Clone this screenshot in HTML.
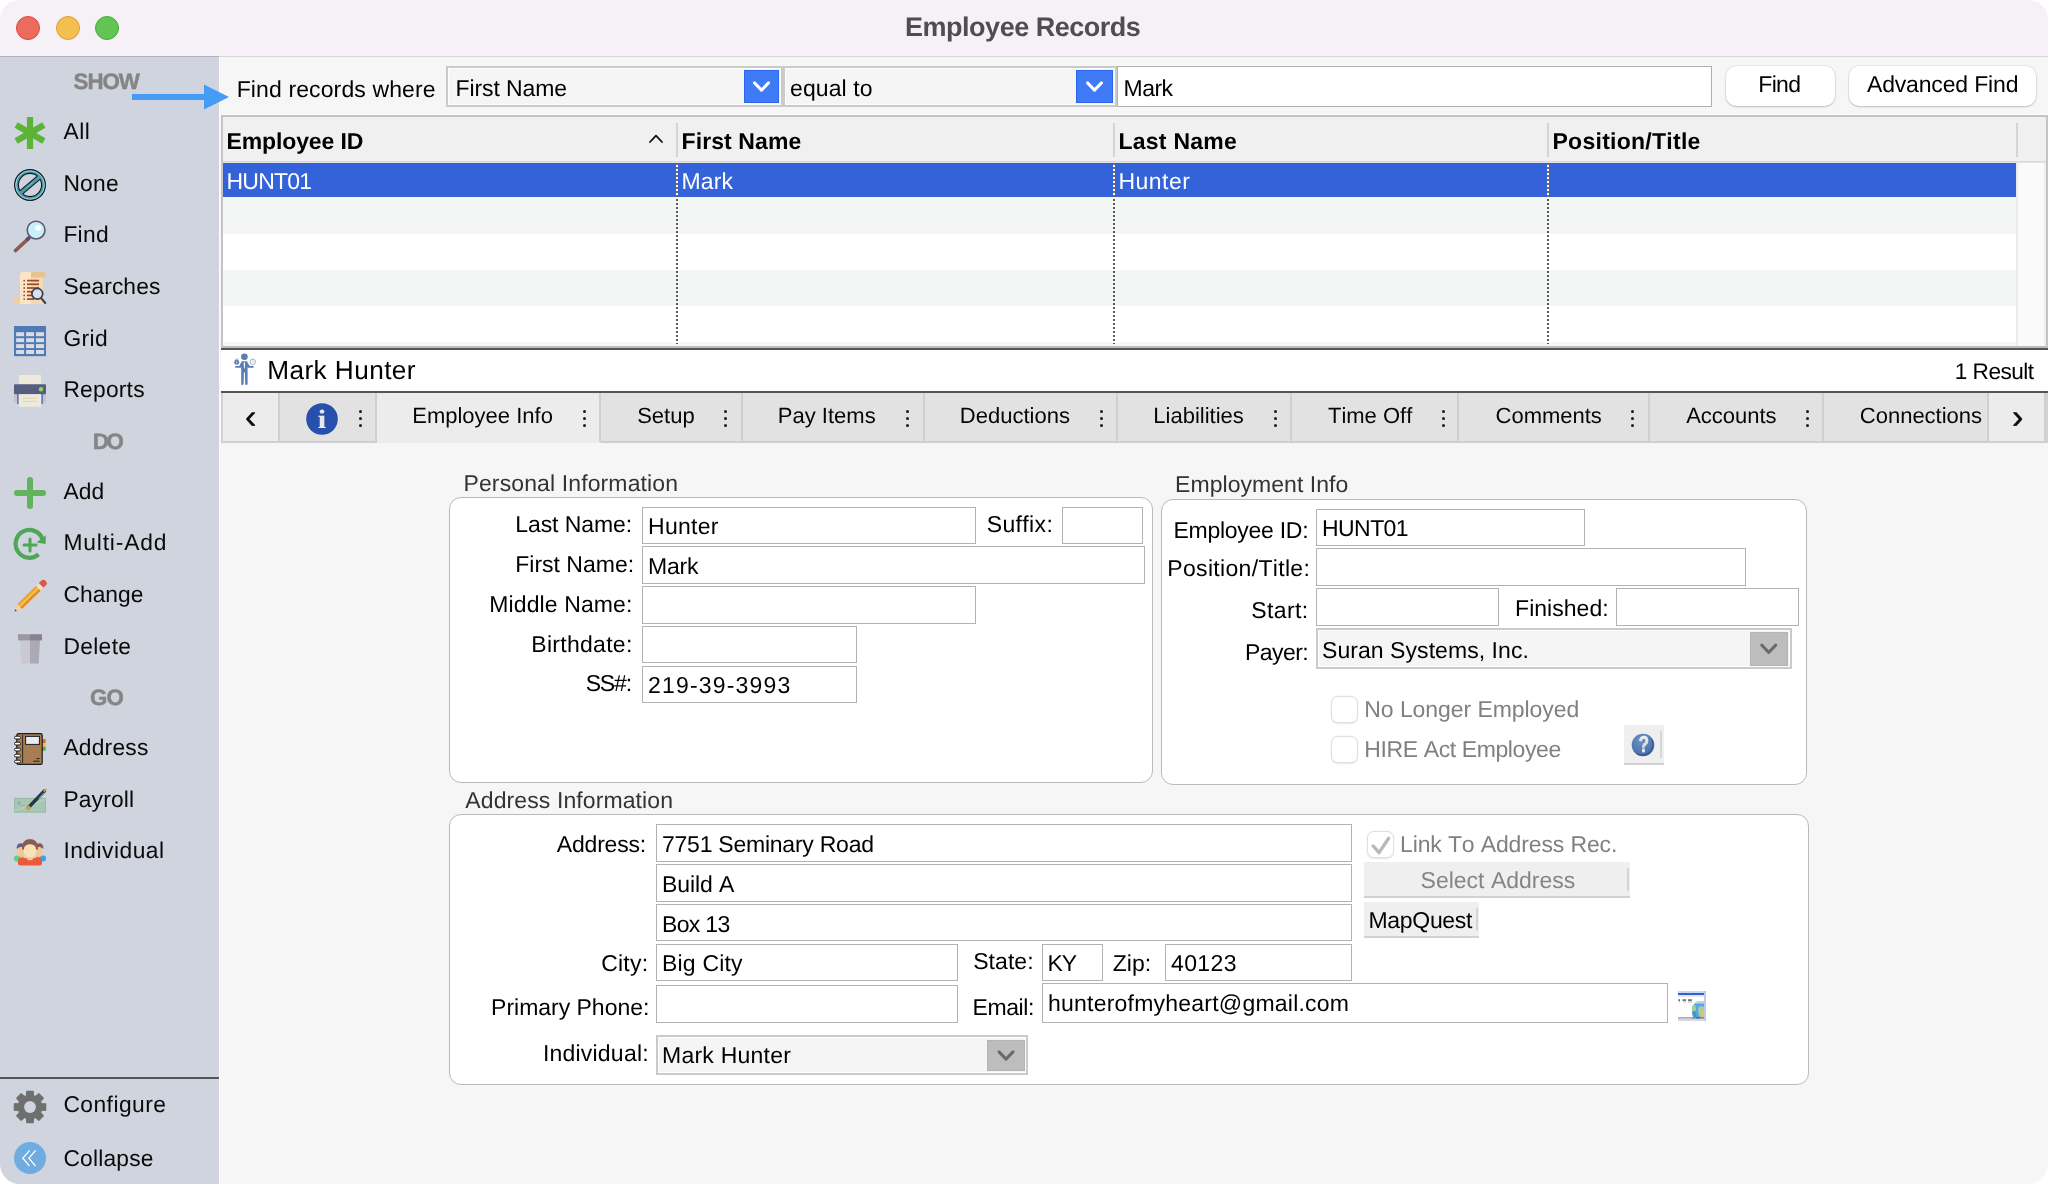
<!DOCTYPE html><html lang="en"><head><meta charset="utf-8"><title>Employee Records</title><style>
*{box-sizing:border-box;margin:0;padding:0}
html,body{width:2048px;height:1184px;background:#fff;overflow:hidden}
body{font-family:"Liberation Sans",sans-serif;font-kerning:none;text-rendering:geometricPrecision}
#win{position:absolute;left:0;top:0;width:2048px;height:1184px;background:#f6f6f6;border-radius:20px;overflow:hidden;will-change:transform}
#win div,#win span,#win svg,#win button,#win label,#win nav,#win header,#win aside,#win main,#win section{position:absolute}
.t{white-space:nowrap;line-height:1;display:block}
.ic{overflow:visible}
.inp{background:#fff;border:1px solid #b2b2b2}
.dd{background:#f5f5f5;border:2px solid #cacaca;box-shadow:inset 0 0 0 1px #fdfdfb}
.grp{background:#fff;border:1px solid #bababa;border-radius:12px}
.cb{background:#fff;border:1px solid #e0e0e0;border-radius:7px;box-shadow:0 0.5px 1.5px rgba(0,0,0,.10)}
.tab{background:#e2e2e2;border-right:2px solid #cfcfcf;border-bottom:2px solid #cfcfcf;top:393px;height:50px}
.dots i{position:absolute;left:0;width:3px;height:3px;background:#1a1a1a;border-radius:50%}
.btn{background:#fff;border-radius:10.5px;box-shadow:0 0 0 1px rgba(0,0,0,.05),0 1px 2px rgba(0,0,0,.18)}
.fbtn{background:#efefef;border-bottom:2px solid #d1d1d1}
</style></head><body><div id="win">
<header style="left:0;top:0;width:2048px;height:57px;background:#f6f1f7;border-bottom:1px solid #d6d6d6">
<div style="left:16px;top:15.5px;width:24px;height:24px;border-radius:50%;background:#ed6a5e;border:1px solid #d8493e"></div>
<div style="left:55.75px;top:15.5px;width:24px;height:24px;border-radius:50%;background:#f5bf4f;border:1px solid #d9a133"></div>
<div style="left:95.25px;top:15.5px;width:24px;height:24px;border-radius:50%;background:#61c554;border:1px solid #4aa93f"></div>
<span class="t" style="left:905.09px;top:14px;font-size:27px;letter-spacing:-0.492px;color:#4e4e4e;font-weight:bold;">Employee Records</span>
</header>
<aside style="left:0;top:56px;width:219px;height:1128px;background:#d0d4de;border-top:1px solid #adb2be">
</aside>
<span class="t" style="left:73.56px;top:71px;font-size:22.3px;letter-spacing:-1.036px;color:#858585;font-weight:bold;-webkit-text-stroke:0.45px #858585;">SHOW</span>
<span class="t" style="left:92.71px;top:431px;font-size:22.3px;letter-spacing:-2.422px;color:#858585;font-weight:bold;-webkit-text-stroke:0.45px #858585;">DO</span>
<span class="t" style="left:90.09px;top:687px;font-size:22.3px;letter-spacing:-0.900px;color:#858585;font-weight:bold;-webkit-text-stroke:0.45px #858585;">GO</span>
<span class="t" style="left:63.40px;top:120px;font-size:22.8px;letter-spacing:0.593px;color:#0a0a0a;">All</span>
<span class="t" style="left:63.40px;top:172px;font-size:22.8px;letter-spacing:0.236px;color:#0a0a0a;">None</span>
<span class="t" style="left:63.40px;top:223px;font-size:22.8px;letter-spacing:0.272px;color:#0a0a0a;">Find</span>
<span class="t" style="left:63.40px;top:275px;font-size:22.8px;letter-spacing:0.086px;color:#0a0a0a;">Searches</span>
<span class="t" style="left:63.40px;top:327px;font-size:22.8px;letter-spacing:0.432px;color:#0a0a0a;">Grid</span>
<span class="t" style="left:63.40px;top:378px;font-size:22.8px;letter-spacing:0.223px;color:#0a0a0a;">Reports</span>
<span class="t" style="left:63.40px;top:480px;font-size:22.8px;letter-spacing:0.101px;color:#0a0a0a;">Add</span>
<span class="t" style="left:63.40px;top:531px;font-size:22.8px;letter-spacing:0.846px;color:#0a0a0a;">Multi-Add</span>
<span class="t" style="left:63.40px;top:583px;font-size:22.8px;letter-spacing:0.049px;color:#0a0a0a;">Change</span>
<span class="t" style="left:63.40px;top:635px;font-size:22.8px;letter-spacing:0.341px;color:#0a0a0a;">Delete</span>
<span class="t" style="left:63.40px;top:736px;font-size:22.8px;letter-spacing:0.214px;color:#0a0a0a;">Address</span>
<span class="t" style="left:63.40px;top:788px;font-size:22.8px;letter-spacing:0.156px;color:#0a0a0a;">Payroll</span>
<span class="t" style="left:63.40px;top:839px;font-size:22.8px;letter-spacing:0.477px;color:#0a0a0a;">Individual</span>
<span class="t" style="left:63.40px;top:1093px;font-size:22.8px;letter-spacing:0.469px;color:#0a0a0a;">Configure</span>
<span class="t" style="left:63.40px;top:1147px;font-size:22.8px;letter-spacing:0.199px;color:#0a0a0a;">Collapse</span>
<div style="left:0;top:1077px;width:219px;height:2px;background:#555"></div>
<svg class="ic" style="left:14px;top:117px" width="32" height="32" viewBox="0 0 32 32" ><g transform="translate(16,16)"><rect x="-3.1" y="-16" width="6.2" height="32" fill="#5bb438"/><g transform="rotate(60)"><rect x="-3.1" y="-16" width="6.2" height="32" fill="#5bb438"/></g><g transform="rotate(-60)"><rect x="-3.1" y="-16" width="6.2" height="32" fill="#5bb438"/></g></g></svg>
<svg class="ic" style="left:14px;top:169px" width="32" height="32" viewBox="0 0 32 32" ><circle cx="16" cy="16" r="15.4" fill="#4b9aab" stroke="#10181c" stroke-width="1.1"/><circle cx="16" cy="16" r="14.2" fill="none" stroke="#a9e4ea" stroke-width="0.9" opacity="0.9"/><circle cx="16" cy="16" r="11.6" fill="#d0d4de" stroke="#10181c" stroke-width="1.1"/><g transform="translate(16,16) rotate(-40)"><rect x="-12.6" y="-2.1" width="25.2" height="4.2" fill="#4b9aab"/><path d="M-11.2 -2.1 H11.2 M-11.2 2.1 H11.2" stroke="#10181c" stroke-width="1.1" fill="none"/><path d="M-3 0 H3" stroke="#a9e4ea" stroke-width="0.8" stroke-dasharray="1.2 1.2"/></g></svg>
<svg class="ic" style="left:14px;top:217px" width="33" height="36" viewBox="0 0 33 36" ><path d="M14.5 21.5 L1.4 33.6" stroke="#8a5b52" stroke-width="3.6" stroke-linecap="round"/><path d="M15.6 20.4 L12.6 23.2" stroke="#5a5066" stroke-width="3.8" stroke-linecap="butt"/><circle cx="22.1" cy="13.1" r="8.9" fill="#c6effc" stroke="#5b5570" stroke-width="1.6"/><ellipse cx="24.2" cy="11" rx="2.9" ry="2.7" fill="#fff"/></svg>
<svg class="ic" style="left:14px;top:272px" width="32" height="32" viewBox="0 0 32 32" ><path d="M6 2.5 Q6 0 9 0 L29 0 Q32 0 32 3 L32 5.5 L28.5 5.5 L28.5 32 L4 32 Q0 32 0 28.5 L0 25 L6 25 Z" fill="#fce5c4"/><path d="M17 0 L29 0 Q32 0 32 3 L32 5.5 L28.5 5.5 L28.5 32 L17 32 Z" fill="#f6d9b0"/><path d="M17 0 L29 0 Q32 0 32 3 L32 5.5 L17 5.5 Z" fill="#e6c391"/><path d="M0 25 L6 25 L6 32 L4 32 Q0 32 0 28.5 Z" fill="#f1cf9f"/><g stroke="#9b4a2c" stroke-width="1.7"><path d="M13 8.6 H25"/><path d="M13 12.3 H25"/><path d="M13 16 H25"/><path d="M13 19.7 H19"/><path d="M13 23.4 H18"/><path d="M13 27.1 H20"/></g><g fill="#9b4a2c"><circle cx="10.2" cy="8.6" r="0.9"/><circle cx="10.2" cy="12.3" r="0.9"/><circle cx="10.2" cy="16" r="0.9"/><circle cx="10.2" cy="19.7" r="0.9"/><circle cx="10.2" cy="23.4" r="0.9"/><circle cx="10.2" cy="27.1" r="0.9"/></g><path d="M27 26 L31.3 31" stroke="#3b404c" stroke-width="2" stroke-linecap="round"/><circle cx="23.3" cy="21.8" r="5.4" fill="#d9dff1" stroke="#3b404c" stroke-width="1.7"/></svg>
<svg class="ic" style="left:14px;top:325.8px" width="32" height="30.2" viewBox="0 0 32 30.2" ><rect x="0" y="0" width="32" height="30.2" fill="#4f7ab6"/><rect x="2.1" y="6.2" width="8" height="4" fill="#d9dce3"/><rect x="12.1" y="6.2" width="8" height="4" fill="#d9dce3"/><rect x="22.0" y="6.2" width="8" height="4" fill="#d9dce3"/><rect x="2.1" y="12.2" width="8" height="4" fill="#d9dce3"/><rect x="12.1" y="12.2" width="8" height="4" fill="#d9dce3"/><rect x="22.0" y="12.2" width="8" height="4" fill="#d9dce3"/><rect x="2.1" y="18.1" width="8" height="4" fill="#d9dce3"/><rect x="12.1" y="18.1" width="8" height="4" fill="#d9dce3"/><rect x="22.0" y="18.1" width="8" height="4" fill="#d9dce3"/><rect x="2.1" y="24.0" width="8" height="4" fill="#d9dce3"/><rect x="12.1" y="24.0" width="8" height="4" fill="#d9dce3"/><rect x="22.0" y="24.0" width="8" height="4" fill="#d9dce3"/></svg>
<svg class="ic" style="left:14px;top:375.2px" width="32" height="32" viewBox="0 0 32 32" ><rect x="5" y="0" width="22" height="10" fill="#edeadb"/><rect x="0" y="17" width="32" height="10.5" fill="#c3c4c6"/><rect x="3" y="18" width="1.6" height="11" fill="#6a78c4"/><rect x="27.4" y="18" width="1.6" height="11" fill="#6a78c4"/><rect x="0" y="9.2" width="32" height="10" rx="1" fill="#565d80"/><circle cx="27" cy="14.2" r="2.2" fill="#90d65a"/><rect x="5" y="19.2" width="22" height="12.6" fill="#edeadb"/><path d="M9 23.2 H23 M9 26.4 H23" stroke="#d6d0b8" stroke-width="0.9"/></svg>
<svg class="ic" style="left:14px;top:477px" width="32" height="32" viewBox="0 0 32 32" ><path d="M16 3 V29 M3 16 H29" stroke="#62b35b" stroke-width="6" stroke-linecap="round"/></svg>
<svg class="ic" style="left:14px;top:529.2px" width="32" height="32" viewBox="0 0 32 32" ><path d="M24.6 25.4 A13.9 13.9 0 1 1 28.6 10.2" fill="none" stroke="#4fa658" stroke-width="4.2" stroke-linecap="butt"/><path d="M31.8 6.2 L31.6 15 L22.4 13.6 Z" fill="#4fa658"/><path d="M16 10 V22 M10 16 H22" stroke="#4fa658" stroke-width="3" stroke-linecap="round"/></svg>
<svg class="ic" style="left:14px;top:580px" width="33" height="33" viewBox="0 0 33 33" ><g transform="translate(0.4,31.6) rotate(-44.4)"><path d="M0 0 L7.4 -3.3 L7.4 3.3 Z" fill="#f7cfa2"/><path d="M0 0 L2.4 -1.1 L2.4 1.1 Z" fill="#3a3a3a"/><rect x="7.4" y="-3.3" width="26" height="6.6" fill="#f0a232"/><rect x="7.4" y="-1.1" width="26" height="2.2" fill="#f6c24a"/><rect x="7.4" y="1.1" width="26" height="2.2" fill="#e28a25"/><rect x="33.4" y="-3.3" width="4" height="6.6" fill="#f2ead0"/><path d="M34.7 -3.3 V3.3 M36.1 -3.3 V3.3" stroke="#d8cfae" stroke-width="0.6"/><path d="M37.4 -3.3 H40.6 A3.3 3.3 0 0 1 40.6 3.3 H37.4 Z" fill="#d45c4e"/></g></svg>
<svg class="ic" style="left:18px;top:632px" width="24" height="32" viewBox="0 0 24 32" ><rect x="7.5" y="0" width="9" height="3" rx="1" fill="#d6d5d9"/><path d="M2 8 L22 8 L20.6 31.5 L3.6 31.5 Z" fill="#cac9cf"/><path d="M12 8 L22 8 L20.6 31.5 L12 31.5 Z" fill="#aba9b4"/><rect x="0" y="2.2" width="12" height="6.2" fill="#9b98a4"/><rect x="12" y="2.2" width="12" height="6.2" fill="#86838f"/></svg>
<svg class="ic" style="left:14px;top:732.6px" width="32" height="32" viewBox="0 0 32 32" ><rect x="28" y="6.2" width="3.6" height="3.8" fill="#e8622c"/><rect x="28" y="10" width="3.6" height="3.8" fill="#f2c230"/><rect x="28" y="13.8" width="3.6" height="3.8" fill="#4caf3c"/><rect x="2.8" y="0.6" width="25.4" height="30.8" rx="1.6" fill="#a77d54" stroke="#1d1d1d" stroke-width="1.2"/><path d="M8.6 2 V30" stroke="#1d1d1d" stroke-width="0.9"/><rect x="11.6" y="3.4" width="13.8" height="8" fill="#e9edf0" stroke="#1d1d1d" stroke-width="1"/><path d="M22.5 25.6 H25.6 M19.4 28.2 H25.6" stroke="#1d1d1d" stroke-width="1"/><rect x="0.5" y="3.2" width="6" height="2.8" rx="1.4" fill="#fff" stroke="#1d1d1d" stroke-width="1"/><rect x="0.5" y="9.2" width="6" height="2.8" rx="1.4" fill="#fff" stroke="#1d1d1d" stroke-width="1"/><rect x="0.5" y="15.2" width="6" height="2.8" rx="1.4" fill="#fff" stroke="#1d1d1d" stroke-width="1"/><rect x="0.5" y="21.2" width="6" height="2.8" rx="1.4" fill="#fff" stroke="#1d1d1d" stroke-width="1"/><rect x="0.5" y="27.2" width="6" height="2.8" rx="1.4" fill="#fff" stroke="#1d1d1d" stroke-width="1"/></svg>
<svg class="ic" style="left:14px;top:788.6px" width="32" height="25" viewBox="0 0 32 25" ><rect x="0.4" y="9.3" width="31.2" height="13.9" fill="#a9c5b5" stroke="#90b6a2" stroke-width="0.8"/><path d="M0.4 22 L31.6 10.5" stroke="#b9d2c4" stroke-width="1.2"/><rect x="3" y="12.3" width="4" height="3.4" fill="#93b7a4"/><path d="M7 16.6 H12" stroke="#93b7a4" stroke-width="0.9"/><path d="M14.2 18.8 L30.6 1.8" stroke="#1f3a4b" stroke-width="3.4" stroke-linecap="round"/><path d="M24.5 9.6 L30.2 3.6" stroke="#9fb4c0" stroke-width="0.8"/><path d="M12.6 20.6 L15.8 17.2" stroke="#d9a53a" stroke-width="3" stroke-linecap="butt"/><path d="M30.4 1.9 L31.8 0.4" stroke="#d9a53a" stroke-width="2" stroke-linecap="round"/></svg>
<svg class="ic" style="left:14px;top:838.8px" width="32" height="27" viewBox="0 0 32 27" ><rect x="0" y="16.4" width="10" height="6" rx="2.6" fill="#5fd081"/><rect x="22" y="16.4" width="10" height="6" rx="2.6" fill="#3fa0f2"/><path d="M2.6 9.4 Q2.6 4.2 7 4.2 Q10.6 4.2 10.6 9.4 Z" fill="#6b5c86"/><path d="M21.4 9.4 Q21.4 4.2 25.4 4.2 Q29.4 4.2 29.4 9.4 Z" fill="#8a5b52"/><rect x="3.6" y="8" width="7.4" height="10" rx="3.4" fill="#f4c894"/><rect x="21" y="8" width="7.4" height="10" rx="3.4" fill="#f4c894"/><rect x="4" y="19" width="24" height="7.6" rx="2.4" fill="#ea5a36"/><rect x="12.6" y="15.6" width="6.8" height="5.6" rx="2.6" fill="#f4c894"/><path d="M8 10.6 Q7.4 0 16 0 Q24.6 0 24 10.6 Z" fill="#8a5b52"/><rect x="9.8" y="5.2" width="12.4" height="13" rx="5.6" fill="#fbe1b6"/></svg>
<svg class="ic" style="left:14px;top:1090.6px" width="32" height="32" viewBox="0 0 32 32" ><path d="M12.51 4.73 L12.82 0.32 L19.18 0.32 L19.49 4.73 L21.51 5.56 L24.84 2.66 L29.34 7.16 L26.44 10.49 L27.27 12.51 L31.68 12.82 L31.68 19.18 L27.27 19.49 L26.44 21.51 L29.34 24.84 L24.84 29.34 L21.51 26.44 L19.49 27.27 L19.18 31.68 L12.82 31.68 L12.51 27.27 L10.49 26.44 L7.16 29.34 L2.66 24.84 L5.56 21.51 L4.73 19.49 L0.32 19.18 L0.32 12.82 L4.73 12.51 L5.56 10.49 L2.66 7.16 L7.16 2.66 L10.49 5.56 Z" fill="#6f6f6f" stroke="#6f6f6f" stroke-width="1.2" stroke-linejoin="round"/><circle cx="16" cy="16" r="5.9" fill="#d0d4de"/></svg>
<svg class="ic" style="left:14px;top:1142px" width="32" height="32" viewBox="0 0 32 32" ><circle cx="16" cy="16" r="16" fill="#6fade0"/><path d="M15.2 8.8 L8.9 16.2 L15.2 23.6 M21.2 8.8 L14.9 16.2 L21.2 23.6" fill="none" stroke="#fff" stroke-width="1.3" stroke-linecap="round" stroke-linejoin="miter"/></svg>
<div style="left:219px;top:57px;width:1px;height:1127px;background:#fbfbfb"></div>
<span class="t" style="left:236.71px;top:78px;font-size:23px;letter-spacing:0.115px;color:#000;">Find records where</span>
<div class="dd" style="left:446px;top:66px;width:337px;height:41px;"></div>
<span class="t" style="left:455.51px;top:77px;font-size:23px;letter-spacing:-0.105px;color:#000;">First Name</span>
<div class="dd" style="left:783px;top:66px;width:334px;height:41px;"></div>
<span class="t" style="left:790.02px;top:77px;font-size:23px;letter-spacing:0.085px;color:#000;">equal to</span>
<div style="left:744px;top:70px;width:35px;height:33px;background:#3f7bf6;box-shadow:inset 0 0 0 1px #2a66f0"><svg class="ic" style="left:0;top:0" width="35" height="33"><path d="M10.5 12.9 L17.5 20.1 L24.5 12.9" fill="none" stroke="#fff" stroke-width="3" stroke-linecap="round" stroke-linejoin="round"/></svg></div>
<div style="left:1076px;top:70px;width:37px;height:33px;background:#3f7bf6;box-shadow:inset 0 0 0 1px #2a66f0"><svg class="ic" style="left:0;top:0" width="37" height="33"><path d="M11.5 12.9 L18.5 20.1 L25.5 12.9" fill="none" stroke="#fff" stroke-width="3" stroke-linecap="round" stroke-linejoin="round"/></svg></div>
<div style="left:1117px;top:66px;width:595px;height:41px;background:#fff;border:1px solid #b0b0b0"></div>
<span class="t" style="left:1123.61px;top:77px;font-size:23px;letter-spacing:-0.586px;color:#000;">Mark</span>
<div class="btn" style="left:1725.5px;top:66px;width:109.5px;height:40px;"></div>
<span class="t" style="left:1758.31px;top:73px;font-size:23px;letter-spacing:-0.691px;color:#000;">Find</span>
<div class="btn" style="left:1848.5px;top:66px;width:187.5px;height:40px;"></div>
<span class="t" style="left:1866.96px;top:73px;font-size:23px;letter-spacing:-0.159px;color:#000;">Advanced Find</span>
<section style="left:221px;top:115px;width:1827px;height:233px;background:#fff;border:2px solid #c4c4c4;border-bottom-color:#bdbdbd">
</section>
<div style="left:221px;top:114px;width:1827px;height:1px;background:#fcfcfc"></div>
<div style="left:223px;top:117px;width:1823px;height:45px;background:#f0f0f0;border-bottom:1px solid #d9d9d9"></div>
<div style="left:223px;top:162px;width:1823px;height:1px;background:#e3e3e3"></div>
<div style="left:223px;top:163px;width:1793px;height:34px;background:#3462d9"></div>
<div style="left:223px;top:197px;width:1793px;height:37px;background:#f4f5f5"></div>
<div style="left:223px;top:270px;width:1793px;height:36px;background:#f4f5f5"></div>
<div style="left:223px;top:342px;width:1793px;height:4px;background:#f5f6f6"></div>
<div style="left:2016px;top:163px;width:30px;height:183px;background:#fafafa;border-left:2px solid #ebebeb;border-right:2px solid #eeeeee"></div>
<div style="left:676px;top:123px;width:2px;height:34px;background:#d4d4d4"></div>
<div style="left:1113px;top:123px;width:2px;height:34px;background:#d4d4d4"></div>
<div style="left:1547px;top:123px;width:2px;height:34px;background:#d4d4d4"></div>
<div style="left:2016px;top:123px;width:2px;height:34px;background:#d4d4d4"></div>
<div style="left:676px;top:163px;width:2px;height:181px;background:repeating-linear-gradient(to bottom,#5a5a5a 0,#5a5a5a 2px,transparent 2px,transparent 4px)"></div>
<div style="left:676px;top:163px;width:2px;height:34px;background:repeating-linear-gradient(to bottom,#7a6a52 0,#7a6a52 2px,#fff 2px,#fff 4px)"></div>
<div style="left:1113px;top:163px;width:2px;height:181px;background:repeating-linear-gradient(to bottom,#5a5a5a 0,#5a5a5a 2px,transparent 2px,transparent 4px)"></div>
<div style="left:1113px;top:163px;width:2px;height:34px;background:repeating-linear-gradient(to bottom,#7a6a52 0,#7a6a52 2px,#fff 2px,#fff 4px)"></div>
<div style="left:1547px;top:163px;width:2px;height:181px;background:repeating-linear-gradient(to bottom,#5a5a5a 0,#5a5a5a 2px,transparent 2px,transparent 4px)"></div>
<div style="left:1547px;top:163px;width:2px;height:34px;background:repeating-linear-gradient(to bottom,#7a6a52 0,#7a6a52 2px,#fff 2px,#fff 4px)"></div>
<span class="t" style="left:226.50px;top:130px;font-size:23px;letter-spacing:-0.128px;color:#000;font-weight:bold;">Employee ID</span>
<span class="t" style="left:681.50px;top:130px;font-size:23px;letter-spacing:0.101px;color:#000;font-weight:bold;">First Name</span>
<span class="t" style="left:1118.50px;top:130px;font-size:23px;letter-spacing:0.245px;color:#000;font-weight:bold;">Last Name</span>
<span class="t" style="left:1552.50px;top:130px;font-size:23px;letter-spacing:0.269px;color:#000;font-weight:bold;">Position/Title</span>
<svg class="ic" style="left:647px;top:132px" width="18" height="14"><path d="M3 10 L9 3.6 L15 10" fill="none" stroke="#111" stroke-width="1.8" stroke-linecap="round" stroke-linejoin="round"/></svg>
<span class="t" style="left:226.50px;top:170px;font-size:23px;letter-spacing:-0.768px;color:#fff;">HUNT01</span>
<span class="t" style="left:681.50px;top:170px;font-size:23px;letter-spacing:0.119px;color:#fff;">Mark</span>
<span class="t" style="left:1118.50px;top:170px;font-size:23px;letter-spacing:0.470px;color:#fff;">Hunter</span>
<div style="left:221px;top:348px;width:1827px;height:2px;background:#555"></div>
<div style="left:221px;top:350px;width:1827px;height:41px;background:#fff"></div>
<div style="left:221px;top:391px;width:1827px;height:2px;background:#555"></div>
<svg class="ic" style="left:233px;top:353px" width="24" height="33" viewBox="0 0 24 33" ><circle cx="11.4" cy="3.8" r="3.3" fill="#5b7db1"/><path d="M2.4 13 Q1.8 13.9 2.4 14.8 L7.4 14.8 L8.2 14.2 L8.2 31 Q8.3 32 9.3 32 Q10.4 32 10.6 31 L10.9 19.6 L11.9 19.6 L12.2 31 Q12.4 32 13.5 32 Q14.5 32 14.6 31 L14.6 14.2 L15.4 14.8 L20.4 14.8 Q21 13.9 20.4 13 L16.6 13 L13.9 8.2 L8.9 8.2 L6.2 13 Z" fill="#5b7db1"/><path d="M11.4 8.6 L12.1 10.4 L11.8 15 L11.4 15.8 L11 15 L10.7 10.4 Z" fill="#fff"/><circle cx="3.7" cy="9.3" r="2.5" fill="#5b7db1"/><path d="M2.3 5.4 L3.7 7 L5.1 5.4" stroke="#5b7db1" stroke-width="0.7" fill="none"/><path d="M3.7 8 V10.6" stroke="#dfe6f2" stroke-width="0.7"/><circle cx="19.8" cy="8.8" r="2.7" fill="#fff" stroke="#9db1d3" stroke-width="1"/><path d="M19.8 7.4 V8.9 H20.8" stroke="#9db1d3" stroke-width="0.7" fill="none"/></svg>
<span class="t" style="left:267.15px;top:357px;font-size:26.2px;letter-spacing:0.435px;color:#000;">Mark Hunter</span>
<span class="t" style="left:1954.78px;top:361px;font-size:22.6px;letter-spacing:-0.503px;color:#000;">1 Result</span>
<nav style="left:221px;top:393px;width:1827px;height:50px;background:#e2e2e2;border-bottom:2px solid #cfcfcf">
</nav>
<div style="left:221px;top:393px;width:2px;height:50px;background:#d2d2d2"></div>
<div class="tab" style="left:223px;width:57px;background:#ececec;"></div>
<div class="tab" style="left:280px;width:97px;background:#e2e2e2;"></div>
<div class="tab" style="left:377px;width:224px;background:#ececec;border-bottom-color:#ececec;border-right-color:#cfcfcf;"></div>
<div class="tab" style="left:601px;width:141.5px;"></div>
<div class="tab" style="left:742.5px;width:182.0px;"></div>
<div class="tab" style="left:924.5px;width:193.0px;"></div>
<div class="tab" style="left:1117.5px;width:174.5px;"></div>
<div class="tab" style="left:1292px;width:167px;"></div>
<div class="tab" style="left:1459px;width:191px;"></div>
<div class="tab" style="left:1650px;width:174px;"></div>
<div class="tab" style="left:1824px;width:165px;"></div>
<div class="tab" style="left:1989px;width:57px;background:#ececec;"></div>
<div style="left:2046px;top:393px;width:2px;height:50px;background:#d2d2d2"></div>
<span class="t" style="left:244.94px;top:400px;font-size:34px;letter-spacing:0.000px;color:#0a0a0a;-webkit-text-stroke:0.5px #0a0a0a;">‹</span>
<svg class="ic" style="left:305.9px;top:402.7px" width="32" height="32" viewBox="0 0 32 32" ><circle cx="16" cy="16" r="15.8" fill="#2750ae"/><text transform="translate(16,25.3) scale(1.2,1)" text-anchor="middle" font-family="Liberation Serif,serif" font-weight="bold" font-size="26.6" fill="#e8e8e8">i</text></svg>
<div class="dots" style="left:358.5px;top:409.8px;width:4px;height:18px"><i style="top:0"></i><i style="top:7.2px"></i><i style="top:14.4px"></i></div>
<span class="t" style="left:412.24px;top:405px;font-size:22px;letter-spacing:0.000px;color:#050505;">Employee Info</span>
<div class="dots" style="left:582.5px;top:409.8px;width:4px;height:18px"><i style="top:0"></i><i style="top:7.2px"></i><i style="top:14.4px"></i></div>
<span class="t" style="left:637.19px;top:405px;font-size:22px;letter-spacing:0.000px;color:#050505;">Setup</span>
<div class="dots" style="left:724.0px;top:409.8px;width:4px;height:18px"><i style="top:0"></i><i style="top:7.2px"></i><i style="top:14.4px"></i></div>
<span class="t" style="left:777.84px;top:405px;font-size:22px;letter-spacing:0.000px;color:#050505;">Pay Items</span>
<div class="dots" style="left:906.0px;top:409.8px;width:4px;height:18px"><i style="top:0"></i><i style="top:7.2px"></i><i style="top:14.4px"></i></div>
<span class="t" style="left:959.84px;top:405px;font-size:22px;letter-spacing:0.000px;color:#050505;">Deductions</span>
<div class="dots" style="left:1099.5px;top:409.8px;width:4px;height:18px"><i style="top:0"></i><i style="top:7.2px"></i><i style="top:14.4px"></i></div>
<span class="t" style="left:1153.37px;top:405px;font-size:22px;letter-spacing:0.000px;color:#050505;">Liabilities</span>
<div class="dots" style="left:1274.0px;top:409.8px;width:4px;height:18px"><i style="top:0"></i><i style="top:7.2px"></i><i style="top:14.4px"></i></div>
<span class="t" style="left:1327.94px;top:405px;font-size:22px;letter-spacing:0.000px;color:#050505;">Time Off</span>
<div class="dots" style="left:1441.5px;top:409.8px;width:4px;height:18px"><i style="top:0"></i><i style="top:7.2px"></i><i style="top:14.4px"></i></div>
<span class="t" style="left:1495.53px;top:405px;font-size:22px;letter-spacing:0.000px;color:#050505;">Comments</span>
<div class="dots" style="left:1631.25px;top:409.8px;width:4px;height:18px"><i style="top:0"></i><i style="top:7.2px"></i><i style="top:14.4px"></i></div>
<span class="t" style="left:1686.13px;top:405px;font-size:22px;letter-spacing:0.000px;color:#050505;">Accounts</span>
<div class="dots" style="left:1805.5px;top:409.8px;width:4px;height:18px"><i style="top:0"></i><i style="top:7.2px"></i><i style="top:14.4px"></i></div>
<span class="t" style="left:1859.79px;top:405px;font-size:22px;letter-spacing:0.000px;color:#050505;">Connections</span>
<span class="t" style="left:2012.12px;top:400px;font-size:34px;letter-spacing:0.000px;color:#0a0a0a;-webkit-text-stroke:0.5px #0a0a0a;">›</span>
<span class="t" style="left:463.51px;top:472px;font-size:23px;letter-spacing:0.119px;color:#333;">Personal Information</span>
<div class="grp" style="left:449px;top:497px;width:704px;height:286px;"></div>
<div class="inp" style="left:642px;top:507px;width:334px;height:37px;"></div>
<div class="inp" style="left:1062px;top:507px;width:81px;height:37px;"></div>
<div class="inp" style="left:642px;top:546px;width:503px;height:38px;"></div>
<div class="inp" style="left:642px;top:586px;width:334px;height:38px;"></div>
<div class="inp" style="left:642px;top:626px;width:215px;height:37px;"></div>
<div class="inp" style="left:642px;top:666px;width:215px;height:37px;"></div>
<span class="t" style="left:515.31px;top:513px;font-size:23px;letter-spacing:-0.091px;color:#000;">Last Name:</span>
<span class="t" style="left:986.76px;top:513px;font-size:23px;letter-spacing:0.364px;color:#000;">Suffix:</span>
<span class="t" style="left:515.31px;top:553px;font-size:23px;letter-spacing:-0.005px;color:#000;">First Name:</span>
<span class="t" style="left:489.31px;top:593px;font-size:23px;letter-spacing:0.105px;color:#000;">Middle Name:</span>
<span class="t" style="left:531.31px;top:633px;font-size:23px;letter-spacing:0.288px;color:#000;">Birthdate:</span>
<span class="t" style="left:585.66px;top:672px;font-size:23px;letter-spacing:-1.140px;color:#000;">SS#:</span>
<span class="t" style="left:648.10px;top:515px;font-size:23px;letter-spacing:0.250px;color:#000;">Hunter</span>
<span class="t" style="left:648.10px;top:555px;font-size:23px;letter-spacing:-0.248px;color:#000;">Mark</span>
<span class="t" style="left:648.10px;top:674px;font-size:23px;letter-spacing:1.172px;color:#000;">219-39-3993</span>
<span class="t" style="left:1175.11px;top:473px;font-size:23px;letter-spacing:0.037px;color:#333;">Employment Info</span>
<div class="grp" style="left:1161px;top:499px;width:646px;height:286px;"></div>
<div class="inp" style="left:1316px;top:509px;width:269px;height:37px;"></div>
<div class="inp" style="left:1316px;top:548px;width:430px;height:38px;"></div>
<div class="inp" style="left:1316px;top:588px;width:183px;height:38px;"></div>
<div class="inp" style="left:1616px;top:588px;width:183px;height:38px;"></div>
<div class="dd" style="left:1316px;top:628px;width:476px;height:41px;"></div>
<div style="left:1750px;top:632px;width:37.5px;height:33.5px;background:#bdbdbd;box-shadow:inset 0 0 0 1px #b4b4b4"><svg class="ic" style="left:0;top:0" width="37.5" height="33.5"><path d="M11.75 13.15 L18.75 20.35 L25.75 13.15" fill="none" stroke="#6a6a6a" stroke-width="3" stroke-linecap="round" stroke-linejoin="round"/></svg></div>
<span class="t" style="left:1173.51px;top:519px;font-size:23px;letter-spacing:-0.270px;color:#000;">Employee ID:</span>
<span class="t" style="left:1167.31px;top:557px;font-size:23px;letter-spacing:0.320px;color:#000;">Position/Title:</span>
<span class="t" style="left:1251.36px;top:599px;font-size:23px;letter-spacing:0.357px;color:#000;">Start:</span>
<span class="t" style="left:1515.11px;top:597px;font-size:23px;letter-spacing:0.020px;color:#000;">Finished:</span>
<span class="t" style="left:1245.11px;top:641px;font-size:23px;letter-spacing:-0.597px;color:#000;">Payer:</span>
<span class="t" style="left:1322.00px;top:517px;font-size:23px;letter-spacing:-0.568px;color:#000;">HUNT01</span>
<span class="t" style="left:1322.00px;top:639px;font-size:23px;letter-spacing:0.058px;color:#000;">Suran Systems, Inc.</span>
<div class="cb" style="left:1330.5px;top:696px;width:27px;height:27px;"></div>
<span class="t" style="left:1364.31px;top:698px;font-size:23px;letter-spacing:-0.068px;color:#808080;">No Longer Employed</span>
<div class="cb" style="left:1330.5px;top:735.5px;width:27px;height:27px;"></div>
<span class="t" style="left:1364.31px;top:738px;font-size:23px;letter-spacing:-0.392px;color:#808080;">HIRE Act Employee</span>
<div class="fbtn" style="left:1624px;top:725px;width:40px;height:40px"></div>
<div style="left:1660px;top:731px;width:2px;height:27px;background:#d6d6d6"></div>
<svg class="ic" style="left:1631.1px;top:732.9px" width="24" height="24" viewBox="0 0 24 24" ><defs><radialGradient id="hg" cx="0.42" cy="0.3" r="0.85"><stop offset="0" stop-color="#6e93cb"/><stop offset="0.65" stop-color="#4f74ad"/><stop offset="1" stop-color="#2f4f88"/></radialGradient><linearGradient id="hq" x1="0" y1="0" x2="0" y2="1"><stop offset="0" stop-color="#ffffff"/><stop offset="0.55" stop-color="#d8d8d0"/><stop offset="1" stop-color="#ffffff"/></linearGradient></defs><circle cx="12" cy="12" r="11.3" fill="url(#hg)"/><path d="M20.6 6 A11 11 0 0 1 6 21" fill="none" stroke="#27457c" stroke-width="0.9" opacity="0.75"/><text transform="translate(12.7,19.3) scale(0.76,1)" text-anchor="middle" font-family="Liberation Sans,sans-serif" font-weight="bold" font-size="22.8" fill="url(#hq)" stroke="#f3f3ee" stroke-width="0.5">?</text></svg>
<span class="t" style="left:465.36px;top:789px;font-size:23px;letter-spacing:0.101px;color:#333;">Address Information</span>
<div class="grp" style="left:449px;top:814px;width:1360px;height:271px;"></div>
<div class="inp" style="left:656px;top:824px;width:696px;height:38px;"></div>
<div class="inp" style="left:656px;top:864px;width:696px;height:38px;"></div>
<div class="inp" style="left:656px;top:904px;width:696px;height:37px;"></div>
<div class="inp" style="left:656px;top:944px;width:302px;height:37px;"></div>
<div class="inp" style="left:1042px;top:944px;width:61px;height:37px;"></div>
<div class="inp" style="left:1165px;top:944px;width:187px;height:37px;"></div>
<div class="inp" style="left:656px;top:985px;width:302px;height:38px;"></div>
<div class="inp" style="left:1042px;top:983px;width:626px;height:40px;"></div>
<div class="dd" style="left:656px;top:1035px;width:372px;height:40px;"></div>
<div style="left:986.5px;top:1039.5px;width:38px;height:31px;background:#bdbdbd;box-shadow:inset 0 0 0 1px #b4b4b4"><svg class="ic" style="left:0;top:0" width="38" height="31"><path d="M12.0 11.9 L19.0 19.1 L26.0 11.9" fill="none" stroke="#6a6a6a" stroke-width="3" stroke-linecap="round" stroke-linejoin="round"/></svg></div>
<span class="t" style="left:556.86px;top:833px;font-size:23px;letter-spacing:-0.217px;color:#000;">Address:</span>
<span class="t" style="left:601.23px;top:952px;font-size:23px;letter-spacing:0.217px;color:#000;">City:</span>
<span class="t" style="left:491.11px;top:996px;font-size:23px;letter-spacing:-0.021px;color:#000;">Primary Phone:</span>
<span class="t" style="left:542.88px;top:1042px;font-size:23px;letter-spacing:0.216px;color:#000;">Individual:</span>
<span class="t" style="left:973.16px;top:950px;font-size:23px;letter-spacing:0.070px;color:#000;">State:</span>
<span class="t" style="left:1112.87px;top:952px;font-size:23px;letter-spacing:-0.037px;color:#000;">Zip:</span>
<span class="t" style="left:972.51px;top:996px;font-size:23px;letter-spacing:-0.413px;color:#000;">Email:</span>
<span class="t" style="left:662.00px;top:833px;font-size:23px;letter-spacing:-0.241px;color:#000;">7751 Seminary Road</span>
<span class="t" style="left:662.00px;top:873px;font-size:23px;letter-spacing:-0.097px;color:#000;">Build A</span>
<span class="t" style="left:662.00px;top:913px;font-size:23px;letter-spacing:-0.669px;color:#000;">Box 13</span>
<span class="t" style="left:662.00px;top:952px;font-size:23px;letter-spacing:0.186px;color:#000;">Big City</span>
<span class="t" style="left:1047.60px;top:952px;font-size:23px;letter-spacing:-1.300px;color:#000;">KY</span>
<span class="t" style="left:1171.00px;top:952px;font-size:23px;letter-spacing:0.388px;color:#000;">40123</span>
<span class="t" style="left:1048.00px;top:992px;font-size:23px;letter-spacing:0.224px;color:#000;">hunterofmyheart@gmail.com</span>
<span class="t" style="left:662.00px;top:1044px;font-size:23px;letter-spacing:0.235px;color:#000;">Mark Hunter</span>
<div class="cb" style="left:1366.5px;top:830.5px;width:27px;height:27px;"><svg class="ic" style="left:0;top:0" width="27" height="27"><path d="M5.2 14 L11 20.6 L20.6 6.4" fill="none" stroke="#b8b8b8" stroke-width="3.4" stroke-linecap="round" stroke-linejoin="round"/></svg></div>
<span class="t" style="left:1400.01px;top:833px;font-size:23px;letter-spacing:-0.133px;color:#808080;">Link To Address Rec.</span>
<div class="fbtn" style="left:1364px;top:862px;width:266px;height:36px"></div>
<div style="left:1627px;top:868px;width:2px;height:23px;background:#d6d6d6"></div>
<span class="t" style="left:1420.56px;top:869px;font-size:23px;letter-spacing:0.007px;color:#858585;">Select Address</span>
<div class="fbtn" style="left:1364px;top:902px;width:115px;height:36px"></div>
<div style="left:1476px;top:908px;width:2px;height:23px;background:#d6d6d6"></div>
<span class="t" style="left:1368.51px;top:909px;font-size:23px;letter-spacing:-0.314px;color:#000;">MapQuest</span>
<svg class="ic" style="left:1678px;top:991px" width="28" height="30" viewBox="0 0 28 30" ><rect x="0" y="0" width="28" height="30" fill="#fefefc"/><rect x="0" y="0" width="28" height="2" fill="#cdd4f5"/><rect x="0" y="2" width="26" height="2" fill="#2866cb"/><rect x="24.4" y="2" width="1.6" height="2" fill="#6b4fa8"/><rect x="0" y="4" width="26" height="1.8" fill="#dfe3ea"/><rect x="0.4" y="8.2" width="1.6" height="2" fill="#666"/><rect x="4.6" y="8.2" width="3.4" height="2" fill="#777"/><rect x="10" y="8.2" width="4" height="2" fill="#777"/><rect x="0.4" y="10.4" width="1.6" height="1.2" fill="#ccc"/><rect x="5.6" y="10.4" width="2.4" height="1.2" fill="#ccc"/><rect x="10" y="10.4" width="4" height="1.2" fill="#ccc"/><path d="M26 10.6 H20 Q14.2 12.4 14 19.6 Q14 24 15.4 26 H26 Z" fill="#55a8dc"/><path d="M14.3 15 Q16 13.4 17.6 14.6 L18 19 Q16.6 21 14.2 20 Z" fill="#9fd29a"/><path d="M20.4 16 Q23.4 14.6 26 16 L26 26 L22 26 Q20.6 24 20.2 20 Z" fill="#a9cf96"/><path d="M22.6 20 Q24.6 19.4 26 20.4 L26 26 L22.4 26 Z" fill="#d9c372"/><path d="M14.4 20.6 Q16.4 20 17.8 21.4 L18.6 26 L15.4 26 Q14.2 24 14.4 20.6 Z" fill="#3d93d8"/><path d="M18 10.6 H26 V12.4 H16.4 Z" fill="#c5d3ea"/><rect x="0" y="26" width="26" height="1.8" fill="#a9a9cd"/><rect x="14" y="26" width="4" height="1.8" fill="#7f8fb0"/><rect x="18" y="26" width="4" height="1.8" fill="#2f6fc4"/><rect x="22" y="26" width="4" height="1.8" fill="#8a8a86"/><rect x="0" y="27.8" width="26" height="2.2" fill="#d9d9dd"/><rect x="26" y="0" width="2" height="30" fill="#bcc8f2"/></svg>
<svg class="ic" style="left:130px;top:82px" width="102" height="30" viewBox="130 82 102 30"><path d="M132 94 H204 V84.5 L229 97 L204 109.5 V100 H132 Z" fill="#459cf5"/></svg>
</div></body></html>
